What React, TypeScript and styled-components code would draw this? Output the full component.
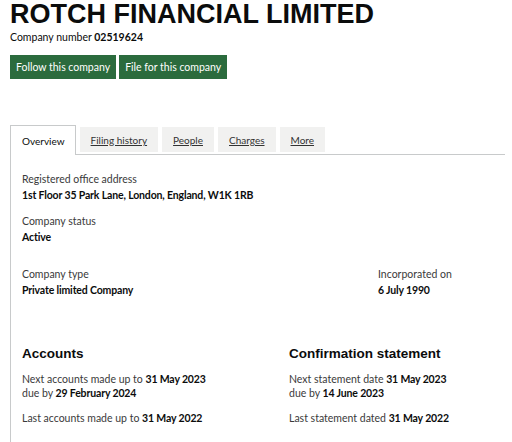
import React from "react";
import styled, { createGlobalStyle } from "styled-components";

const Global = createGlobalStyle`
  html, body { margin: 0; padding: 0; background: #ffffff; overflow: hidden; }
  body { font-family: Lato, "Liberation Sans", Arial, sans-serif; color: #0b0c0c; }
  * { box-sizing: border-box; }
`;

const Page = styled.div`
  width: 512px;
  height: 442px;
  padding-left: 10px;
  overflow: hidden;
`;

const Title = styled.h1`
  margin: 0;
  font-family: "Liberation Sans", Arial, sans-serif;
  font-weight: 700;
  font-size: 27px;
  line-height: 28px;
  color: #0b0c0c;
  white-space: nowrap;
`;

const CompanyNumber = styled.p`
  margin: 2px 0 0;
  font-size: 10.5px;
  line-height: 14px;
  color: #0b0c0c;
  strong { font-weight: 700; }
`;

const ButtonRow = styled.div`
  display: flex;
  gap: 3px;
  margin-top: 11px;
`;

const Button = styled.button`
  background: #2b6b3d;
  color: #ffffff;
  border: none;
  margin: 0;
  font-family: Lato, "Liberation Sans", Arial, sans-serif;
  font-size: 10.5px;
  line-height: 14px;
  padding: 5px 6px;
  height: 24px;
  cursor: pointer;
`;

const TabList = styled.div`
  margin-top: 46px;
  width: 495px;
  display: flex;
  align-items: flex-end;
  border-bottom: 1px solid #c8cacb;
`;

const Tab = styled.a<{ $active?: boolean }>`
  display: flex;
  align-items: center;
  font-size: 10px;
  line-height: 14px;
  margin-right: 4px;
  ${(p) =>
    p.$active
      ? `
    height: 30px;
    margin-bottom: -1px;
    padding: 0 10px 0 11px;
    background: #ffffff;
    border: 1px solid #c8cacb;
    border-bottom: none;
    color: #0b0c0c;
    text-decoration: none;
  `
      : `
    height: 25px;
    margin-bottom: 2px;
    padding: 0 11px;
    background: #f1f1f0;
    color: #333333;
    text-decoration: underline;
  `}
`;

const Panel = styled.div`
  border-left: 1px solid #c8cacb;
  padding: 17px 0 30px 11px;
  height: 300px;
`;

const Grid = styled.div<{ $cols: string; $top: number }>`
  display: grid;
  grid-template-columns: ${(p) => p.$cols};
  margin-top: ${(p) => p.$top}px;
`;

const Field = styled.div`
  margin-bottom: 11px;
`;

const Label = styled.div`
  font-size: 10.5px;
  line-height: 15px;
  color: #3a3a3a;
`;

const Value = styled.div`
  font-size: 10.5px;
  line-height: 15px;
  font-weight: 700;
  letter-spacing: -0.15px;
  margin-top: 1px;
  color: #0b0c0c;
`;

const Heading = styled.h2`
  margin: 0 0 10px;
  font-family: "Liberation Sans", Arial, sans-serif;
  font-weight: 700;
  font-size: 13.5px;
  line-height: 16px;
  color: #0b0c0c;
`;

const Para = styled.p`
  margin: 0 0 11px;
  font-size: 10.5px;
  line-height: 14px;
  color: #3a3a3a;
  strong { font-weight: 700; color: #0b0c0c; letter-spacing: -0.15px; }
`;

export default function App() {
  return (
    <>
      <Global />
      <Page>
        <Title>ROTCH FINANCIAL LIMITED</Title>
        <CompanyNumber>
          Company number <strong>02519624</strong>
        </CompanyNumber>
        <ButtonRow>
          <Button>Follow this company</Button>
          <Button>File for this company</Button>
        </ButtonRow>
        <TabList>
          <Tab $active>Overview</Tab>
          <Tab href="#">Filing history</Tab>
          <Tab href="#">People</Tab>
          <Tab href="#">Charges</Tab>
          <Tab href="#">More</Tab>
        </TabList>
        <Panel>
          <Field>
            <Label>Registered office address</Label>
            <Value>1st Floor 35 Park Lane, London, England, W1K 1RB</Value>
          </Field>
          <Field>
            <Label>Company status</Label>
            <Value>Active</Value>
          </Field>
          <Grid $cols="356px 1fr" $top={22}>
            <Field>
              <Label>Company type</Label>
              <Value>Private limited Company</Value>
            </Field>
            <Field>
              <Label>Incorporated on</Label>
              <Value>6 July 1990</Value>
            </Field>
          </Grid>
          <Grid $cols="267px 1fr" $top={37}>
            <div>
              <Heading>Accounts</Heading>
              <Para>
                Next accounts made up to <strong>31 May 2023</strong>
                <br />
                due by <strong>29 February 2024</strong>
              </Para>
              <Para>
                Last accounts made up to <strong>31 May 2022</strong>
              </Para>
            </div>
            <div>
              <Heading>Confirmation statement</Heading>
              <Para>
                Next statement date <strong>31 May 2023</strong>
                <br />
                due by <strong>14 June 2023</strong>
              </Para>
              <Para>
                Last statement dated <strong>31 May 2022</strong>
              </Para>
            </div>
          </Grid>
        </Panel>
      </Page>
    </>
  );
}
